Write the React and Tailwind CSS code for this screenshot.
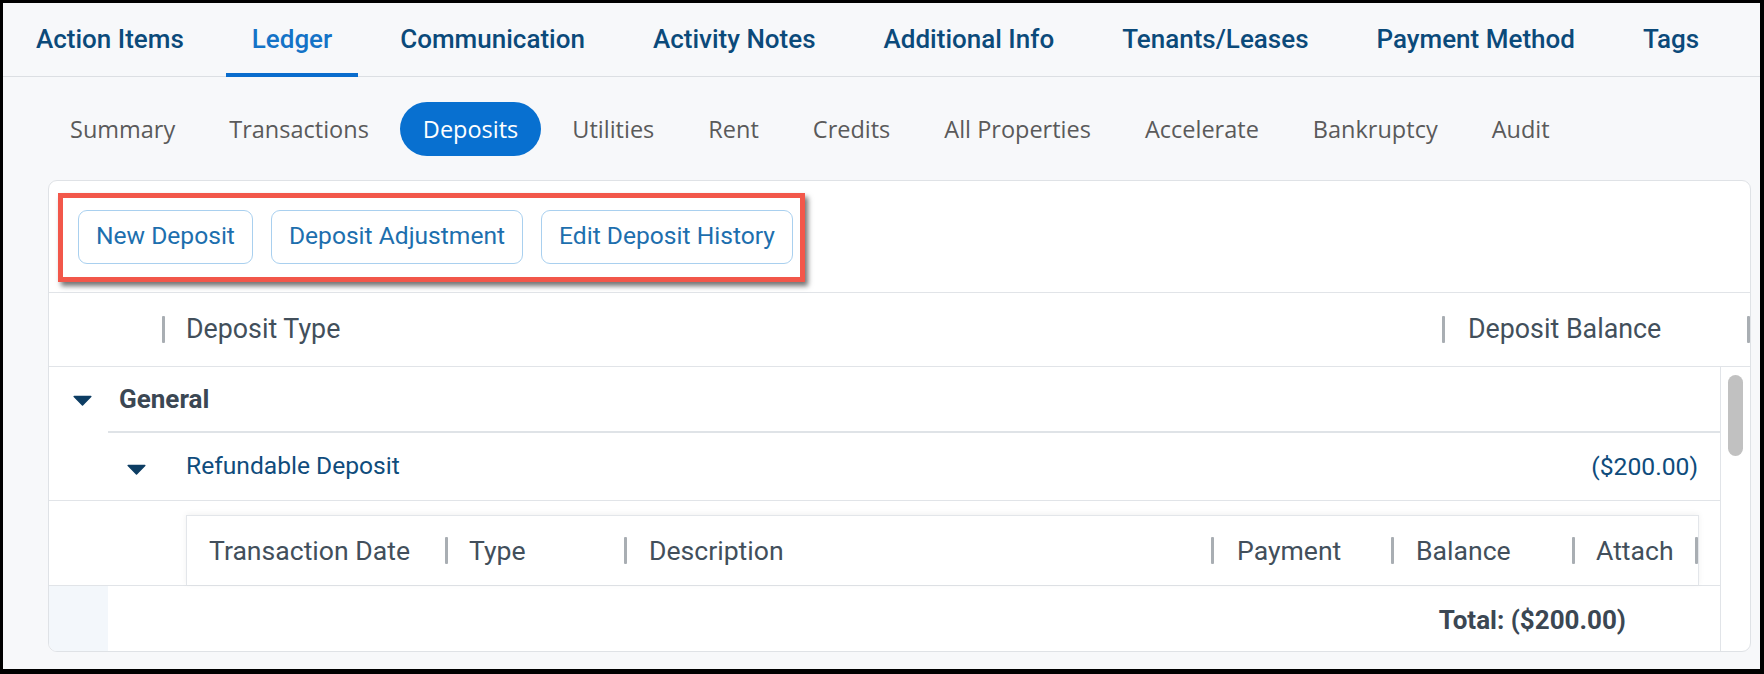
import React from 'react';

const mainTabs = ['Action Items', 'Ledger', 'Communication', 'Activity Notes', 'Additional Info', 'Tenants/Leases', 'Payment Method', 'Tags'];
const subTabs = ['Summary', 'Transactions', 'Deposits', 'Utilities', 'Rent', 'Credits', 'All Properties', 'Accelerate', 'Bankruptcy', 'Audit'];

const roboto = { fontFamily: 'Roboto, "Liberation Sans", sans-serif' };

const Sep = () => <span className="block w-[3px] h-[27px] bg-[#a9aeb3] rounded-[1px] shrink-0" />;

const Caret = () => (
  <svg width="19" height="11" viewBox="0 0 19 11" className="shrink-0">
    <path d="M1.2 1.5 L17.8 1.5 L9.5 10 Z" fill="#0d3d63" stroke="#0d3d63" strokeWidth="1.5" strokeLinejoin="round" />
  </svg>
);

const App = () => {
  return (
    <div className="w-[1764px] h-[674px] bg-black pt-[3px] pl-[3px] pr-[4px] pb-[5px]" style={roboto}>
      <div className="w-full h-full bg-[#f7f8fa] flex flex-col">
        {/* main tabs */}
        <div className="flex items-stretch pl-[7px] gap-[16px] border-b border-[#dcdfe3] h-[74px] shrink-0">
          {mainTabs.map(t => (
            <div
              key={t}
              className={`px-[26px] flex items-center pb-[2px] text-[26px] font-medium -mb-px ${t === 'Ledger' ? 'text-[#1473c7] border-b-4 border-[#0a6ccd] pt-[4px]' : 'text-[#0b4a7a]'}`}
            >
              {t}
            </div>
          ))}
        </div>

        {/* sub tabs */}
        <div className="flex items-center pl-[44px] gap-[8px] pt-[25px] pb-[24px] shrink-0" style={{ fontFamily: '"Open Sans", sans-serif' }}>
          {subTabs.map(t => (
            <div
              key={t}
              className={`px-[23px] h-[54px] flex items-center pt-[2px] rounded-full text-[23.5px] ${t === 'Deposits' ? 'bg-[#0870d0] text-white' : 'text-[#5a5a5a]'}`}
            >
              {t}
            </div>
          ))}
        </div>

        {/* card */}
        <div className="ml-[45px] mr-[9px] h-[472px] bg-white border border-[#dfe2e6] rounded-[9px] flex flex-col overflow-hidden">
          <div className="relative h-[112px] shrink-0 border-b border-[#e1e4e8] flex items-center pl-[29px] gap-[18px]">
            {['New Deposit', 'Deposit Adjustment', 'Edit Deposit History'].map(b => (
              <button key={b} className="h-[54px] px-[17px] border border-[#a9d0ef] rounded-[9px] text-[24.6px] text-[#1d6fae] bg-white">
                {b}
              </button>
            ))}
            <div className="absolute left-[9px] top-[12px] w-[747px] h-[89px] border-[5px] border-[#f2574a] shadow-[3px_4px_5px_rgba(0,0,0,0.55)] pointer-events-none" />
          </div>

          {/* header row */}
          <div className="h-[74px] shrink-0 border-b border-[#e1e4e8] flex items-center text-[26.8px] text-[#424f5b]">
            <div className="w-[113px]" />
            <Sep />
            <div className="flex-1 pl-[21px]">Deposit Type</div>
            <Sep />
            <div className="w-[302px] pl-[23px]">Deposit Balance</div>
            <Sep />
          </div>

          {/* body */}
          <div className="flex flex-1 min-h-0">
            <div className="flex-1 flex flex-col">
              <div className="h-[66px] shrink-0 flex">
                <div className="w-[59px] shrink-0 flex items-center justify-end pr-[16px]">
                  <Caret />
                </div>
                <div className="flex-1 border-b-2 border-[#dfe3e7] flex items-center pl-[11px] font-bold text-[#3b4753] text-[26px]">General</div>
              </div>
              <div className="h-[68px] shrink-0 border-b border-[#e1e4e8] flex items-center">
                <div className="w-[137px] shrink-0 flex justify-end pr-[40px] pt-[6px]">
                  <Caret />
                </div>
                <div className="flex-1 text-[#0f4c7c] text-[24.6px]">Refundable Deposit</div>
                <div className="pr-[22px] text-[#0f4c7c] text-[24.7px]">($200.00)</div>
              </div>
              <div className="h-[85px] shrink-0 flex items-end pl-[137px] pr-[21px] border-b border-[#e1e4e8]">
                <div className="flex-1 h-[70px] border border-b-0 border-[#e3e6ea] shadow-[0_-1px_6px_rgba(0,0,0,0.06)] flex items-center text-[26.6px] text-[#424f5b]">
                  <div className="w-[258px] pl-[22px]">Transaction Date</div>
                  <Sep />
                  <div className="w-[176px] pl-[21px]">Type</div>
                  <Sep />
                  <div className="flex-1 pl-[22px]">Description</div>
                  <Sep />
                  <div className="w-[177px] pl-[23px]">Payment</div>
                  <Sep />
                  <div className="w-[178px] pl-[22px]">Balance</div>
                  <Sep />
                  <div className="w-[120px] pl-[21px]">Attach</div>
                  <Sep />
                </div>
              </div>
              <div className="flex-1 flex">
                <div className="w-[59px] bg-[#f3f7fb]" />
                <div className="flex-1 flex items-center justify-end pr-[94px] pt-[3px] font-bold text-[26px] text-[#3b4753]">Total: ($200.00)</div>
              </div>
            </div>
            {/* scrollbar */}
            <div className="w-[30px] shrink-0 border-l border-[#e1e4e8] pt-[8px] flex justify-center">
              <div className="w-[15px] h-[81px] rounded-full bg-[#c1c1c1]" />
            </div>
          </div>
        </div>
      </div>
    </div>
  );
};

export default App;
